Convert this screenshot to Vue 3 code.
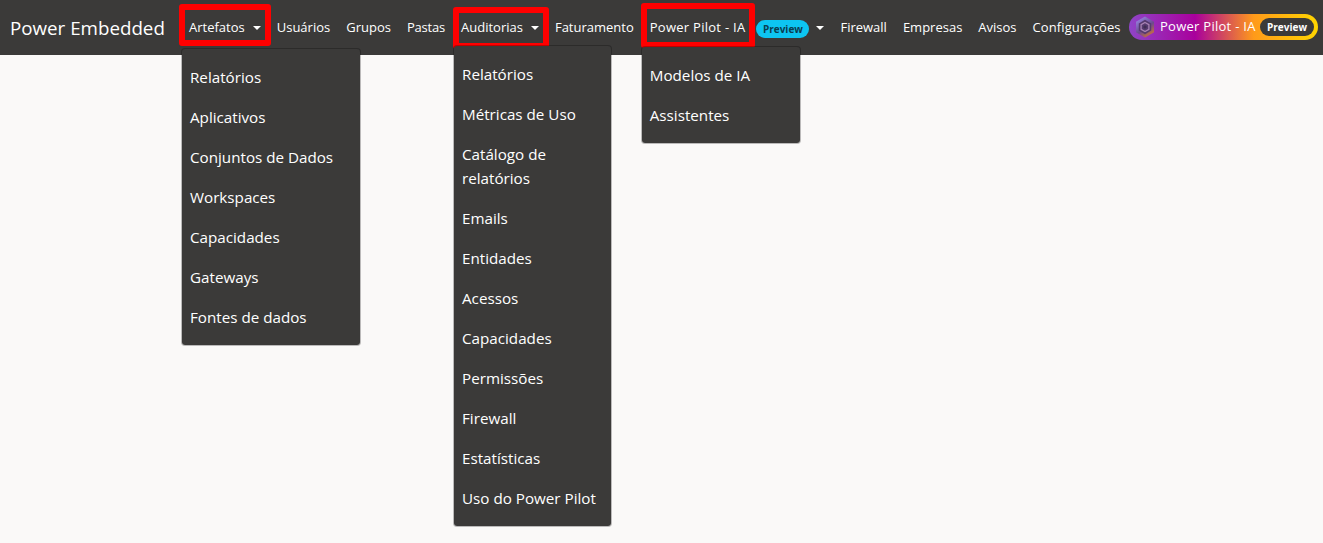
<script setup>
const artefatos = ['Relatórios','Aplicativos','Conjuntos de Dados','Workspaces','Capacidades','Gateways','Fontes de dados']
const auditorias = ['Relatórios','Métricas de Uso','Catálogo de relatórios','Emails','Entidades','Acessos','Capacidades','Permissões','Firewall','Estatísticas','Uso do Power Pilot']
const pilot = ['Modelos de IA','Assistentes']
</script>

<template>
  <div class="page">
    <nav class="navbar">
      <a class="brand">Power Embedded</a>
      <ul class="nav">
        <li class="item">
          <a class="link">Artefatos<span class="caret"></span></a>
          <span class="frame frame-a"></span>
          <ul class="menu menu-a"><li v-for="m in artefatos" :key="m">{{ m }}</li></ul>
        </li>
        <li class="item"><a class="link">Usuários</a></li>
        <li class="item"><a class="link">Grupos</a></li>
        <li class="item"><a class="link tight">Pastas</a></li>
        <li class="item">
          <a class="link">Auditorias<span class="caret"></span></a>
          <span class="frame frame-b"></span>
          <ul class="menu menu-b"><li v-for="m in auditorias" :key="m">{{ m }}</li></ul>
        </li>
        <li class="item"><a class="link">Faturamento</a></li>
        <li class="item">
          <a class="link"><span class="wide">Power Pilot - IA</span><span class="badge">Preview</span><span class="caret caret-p"></span></a>
          <span class="frame frame-c"></span>
          <ul class="menu menu-c"><li v-for="m in pilot" :key="m">{{ m }}</li></ul>
        </li>
        <li class="item"><a class="link">Firewall</a></li>
        <li class="item"><a class="link">Empresas</a></li>
        <li class="item"><a class="link">Avisos</a></li>
        <li class="item"><a class="link cfg">Configurações</a></li>
      </ul>
      <div class="pill">
        <svg class="hex" width="20" height="22" viewBox="0 0 20 22">
          <defs>
            <linearGradient id="hexg" x1="0.2" y1="0" x2="0.8" y2="1">
              <stop offset="0" stop-color="#9a86e6"/>
              <stop offset=".55" stop-color="#6a4a8e"/>
              <stop offset="1" stop-color="#d9762f"/>
            </linearGradient>
          </defs>
          <path d="M10 .5 L19 5.700 V16.300 L10 21.500 L1 16.300 V5.700 Z" fill="url(#hexg)"/>
          <path d="M10 3.800 L16.200 7.400 V14.600 L10 18.200 L3.800 14.600 V7.400 Z" fill="#553a6e"/>
          <path d="M10 6.500 L13.900 8.750 V13.250 L10 15.500 L6.100 13.250 V8.750 Z" fill="none" stroke="#a883b4" stroke-width="1.300"/>
          <path d="M10 9.300 L11.500 10.150 V11.850 L10 12.700 L8.500 11.850 V10.150 Z" fill="#3f2e52"/>
        </svg>
        <span class="pill-text">Power Pilot - IA</span>
        <span class="pill-tag">Preview</span>
      </div>
    </nav>
  </div>
</template>

<style>
html, body { margin: 0; background: #faf9f8; }
</style>

<style scoped>
.page {
  min-height: 543px;
  background: #faf9f8;
  font-family: "Open Sans", "Noto Sans", sans-serif;
  color: #fff;
}
.navbar {
  height: 55px;
  background: #3b3a39;
  display: flex;
  align-items: center;
  padding: 0 5px 0 10px;
  box-sizing: border-box;
}
.brand {
  font-size: 18.750px;
  width: 171px;
  flex: none;
  white-space: nowrap;
}
.nav {
  list-style: none;
  margin: 0;
  padding: 0;
  display: flex;
  align-items: center;
  flex: 1;
}
.item { position: relative; }
.link {
  display: flex;
  align-items: center;
  padding: 0 8px;
  font-size: 13px;
  line-height: 21px;
  white-space: nowrap;
}
.tight { letter-spacing: -0.2px; }
.wide { letter-spacing: 0.27px; }
.cfg { letter-spacing: 0.1px; }
.caret {
  width: 0;
  height: 0;
  margin-left: 8px;
  border-top: 4.500px solid #fff;
  border-left: 4.500px solid transparent;
  border-right: 4.500px solid transparent;
}
.caret-p { margin-left: 7px; }
.badge {
  margin-left: 11px;
  width: 53px;
  height: 18px;
  border-radius: 9px;
  background: #0dc5f1;
  color: #0a3d50;
  font-size: 10px;
  font-weight: 700;
  line-height: 18px;
  text-align: center;
  margin-top: 2px;
}
.frame {
  position: absolute;
  border: 6px solid #f00;
  border-radius: 3px;
  box-sizing: border-box;
  pointer-events: none;
}
.frame-a { left: -2px; top: -13px; width: 92px; height: 42px; }
.frame-b { left: 0; top: -10px; width: 96px; height: 42px; }
.frame-c { left: -1px; top: -14px; width: 114px; height: 45px; }
.menu {
  position: absolute;
  z-index: 2;
  list-style: none;
  margin: 0;
  padding: 8px 0;
  background: #3b3a39;
  background-clip: padding-box;
  border: 1px solid rgba(0, 0, 0, 0.25);
  border-radius: 4px;
  box-sizing: border-box;
  font-size: 15.200px;
  line-height: 24px;
}
.menu li { padding: 8px; }
.menu-a { left: 0; top: 31px; width: 180px; }
.menu-b { left: 0; top: 28px; width: 159px; }
.menu-c { left: -1px; top: 29px; width: 160px; }
.pill {
  flex: none;
  width: 189px;
  height: 26px;
  margin-top: -1px;
  border-radius: 13px;
  background: linear-gradient(90deg, #8f45c8 0%, #a9009c 35%, #ff9a1a 66%, #ffd500 100%);
  display: flex;
  align-items: center;
  padding: 0 4px 0 6px;
  box-sizing: border-box;
  font-size: 13px;
}
.hex { flex: none; }
.pill-text {
  margin-left: 5px;
  white-space: nowrap;
  flex: 1;
  margin-top: -2px;
  letter-spacing: 0.27px;
}
.pill-tag {
  flex: none;
  width: 54px;
  height: 18px;
  border-radius: 9px;
  background: #3b3a39;
  font-size: 10px;
  font-weight: 700;
  line-height: 18px;
  text-align: center;
}
</style>
